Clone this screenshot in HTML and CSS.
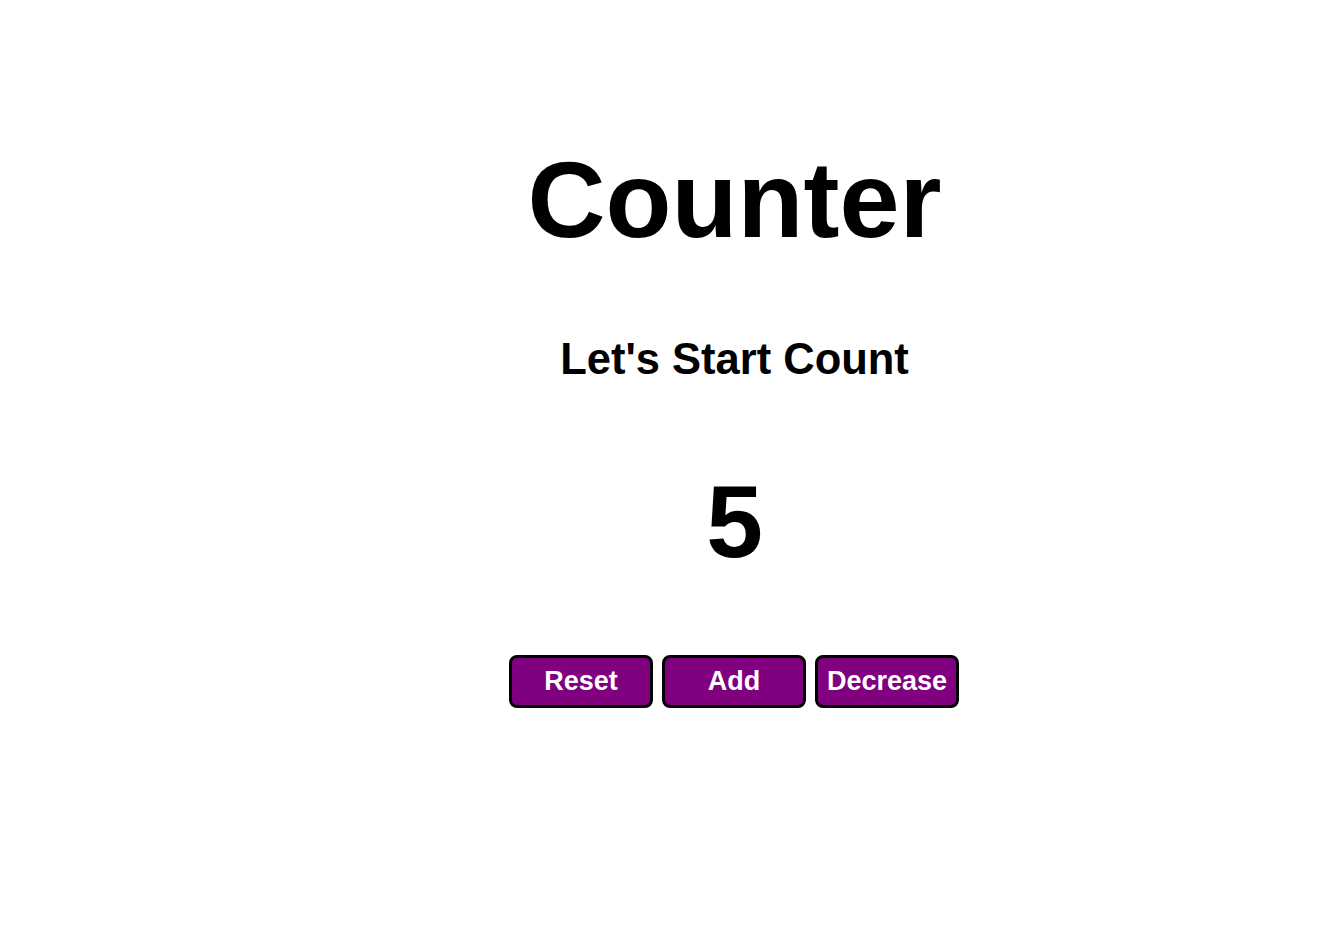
FILE: index.html
```html
<!DOCTYPE html>
<html lang="en">
<head>
<meta charset="utf-8">
<title>Counter</title>
<link rel="stylesheet" href="styles.css">
</head>
<body>
<div class="app">
  <h1 class="title">Counter</h1>
  <h2 class="subtitle">Let's Start Count</h2>
  <div class="count">5</div>
  <div class="actions">
    <button class="btn">Reset</button>
    <button class="btn">Add</button>
    <button class="btn">Decrease</button>
  </div>
</div>
</body>
</html>
```
FILE: styles.css
```css
html, body {
  margin: 0;
  padding: 0;
  background: #ffffff;
}
body {
  font-family: "Liberation Sans", Arial, sans-serif;
  color: #000;
}
.app {
  padding-left: 130px;
  display: flex;
  flex-direction: column;
  align-items: center;
  text-align: center;
}
.title {
  margin: 146px 0 0;
  font-size: 108px;
  line-height: 108px;
  font-weight: bold;
}
.subtitle {
  margin: 83px 0 0;
  font-size: 43.5px;
  line-height: 44px;
  font-weight: bold;
}
.count {
  margin: 90px 0 0;
  font-size: 102px;
  line-height: 102px;
  font-weight: bold;
}
.actions {
  margin-top: 82px;
  margin-left: -1px;
  display: flex;
  gap: 9px;
}
.btn {
  width: 144px;
  height: 53px;
  padding: 0;
  background: #800080;
  color: #fff;
  border: 3px solid #000;
  border-radius: 8px;
  font-family: "Liberation Sans", Arial, sans-serif;
  font-size: 27px;
  font-weight: bold;
}
```
